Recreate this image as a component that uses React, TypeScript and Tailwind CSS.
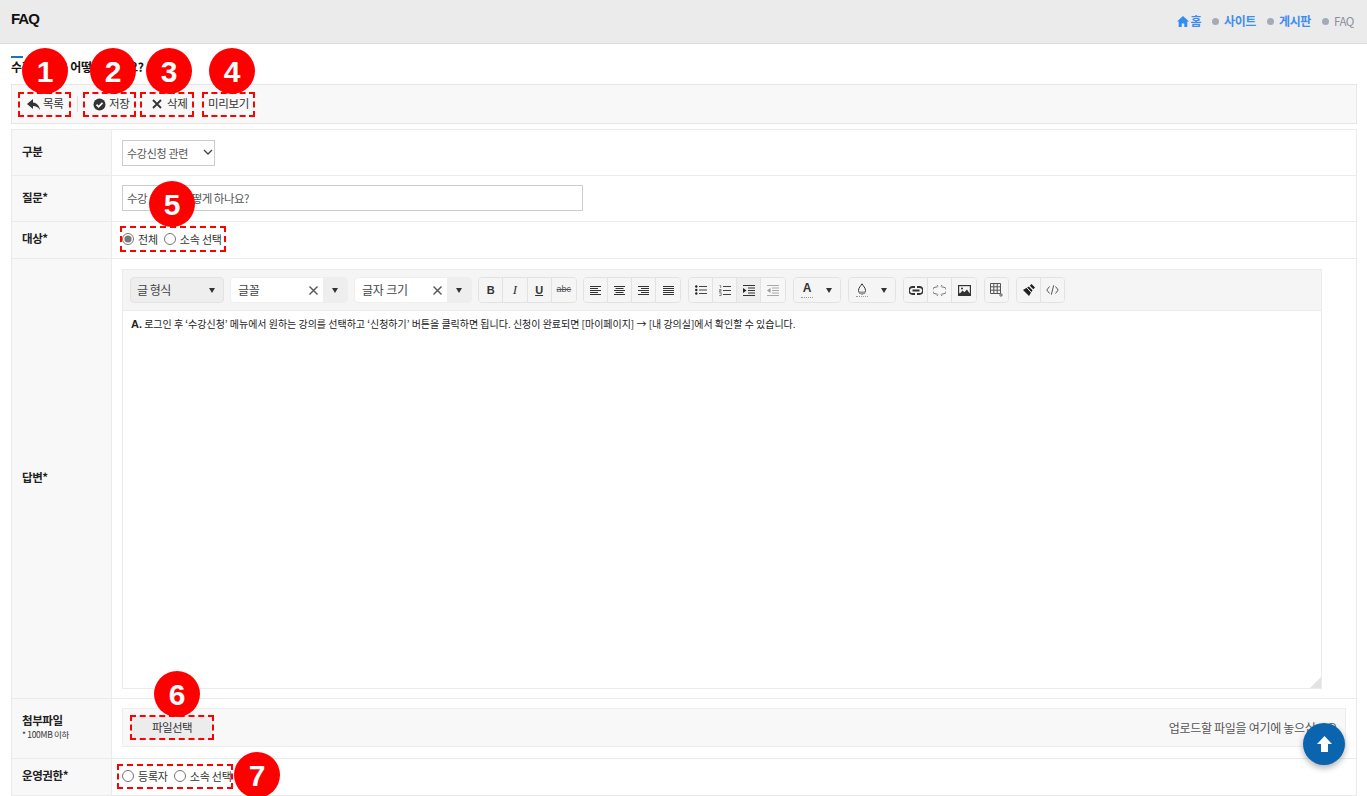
import React from "react";

const font = { fontFamily: '"Noto Sans CJK KR", "Noto Sans", sans-serif' };

const Lines = ({ kind }: { kind: "left" | "center" | "right" | "justify" }) => {
  const rows = {
    left: [[0, 11], [0, 8], [0, 11], [0, 8], [0, 11]],
    center: [[0, 11], [1.5, 8], [0, 11], [1.5, 8], [0, 11]],
    right: [[0, 11], [3, 8], [0, 11], [3, 8], [0, 11]],
    justify: [[0, 11], [0, 11], [0, 11], [0, 11], [0, 11]],
  }[kind];
  return (
    <svg width="11" height="11" viewBox="0 0 11 11" stroke="#333" strokeWidth="1">
      {rows.map(([x, w], i) => (
        <path key={i} d={`M${x} ${1.5 + i * 2}h${w}`} />
      ))}
    </svg>
  );
};

const Btn = ({ children, w = "w-[24px]", bg = "bg-[#f5f5f5]" }: { children: React.ReactNode; w?: string; bg?: string }) => (
  <div className={`${w} h-[24px] flex items-center justify-center border-r border-[#e2e2e2] last:border-r-0 ${bg}`}>
    {children}
  </div>
);

const Group = ({ children }: { children: React.ReactNode }) => (
  <div className="flex h-[26px] border border-[#e2e2e2] rounded-[4px] overflow-hidden shrink-0">{children}</div>
);

const Tri = () => <span className="w-0 h-0 border-x-[3.5px] border-x-transparent border-t-[5px] border-t-[#333]" />;

const ComboBox = ({ label }: { label: string }) => (
  <div className="flex w-[118px] h-[26px] rounded-[4px] overflow-hidden border border-[#eeeeee] shrink-0 bg-white">
    <div className="flex-1 flex items-center pl-[7px] pr-[5px] text-[12px] text-[#444] justify-between tracking-[-0.2px]">
      <span>{label}</span>
      <svg width="9" height="9" viewBox="0 0 9 9" stroke="#555" strokeWidth="1.4">
        <path d="M.5.500l8 8M8.500.500l-8 8" />
      </svg>
    </div>
    <div className="w-[24px] bg-[#eeeeee] flex items-center justify-center"><Tri /></div>
  </div>
);

const Row = ({ label, sub, h, children, top }: { label: string; sub?: string; h: string; children: React.ReactNode; top?: boolean }) => (
  <div className={`flex ${h} border-b border-[#ebebeb]`}>
    <div className="w-[100px] shrink-0 bg-[#f8f8f8] border-r border-[#ebebeb] pl-[10px] pb-[4px] flex flex-col justify-center">
      <div className="text-[11.5px] font-bold text-[#222] tracking-[-0.4px] leading-[14px]">{label}</div>
      {sub && <div className="text-[8.5px] text-[#333] leading-[12px] tracking-[-0.3px] mt-[1px]">{sub}</div>}
    </div>
    <div className={`flex-1 min-w-0 px-[10px] flex ${top ? "items-start" : "items-center pb-[2px]"}`}>{children}</div>
  </div>
);

const Radio = ({ label, checked }: { label: string; checked?: boolean }) => (
  <label className="flex items-center gap-[4px] text-[11px] text-[#333] tracking-[-0.2px]">
    <input type="radio" defaultChecked={checked} className="m-0 w-[12px] h-[12px] accent-[#777]" />
    {label}
  </label>
);

const ToolBtn = ({ icon, label, w }: { icon?: React.ReactNode; label: string; w: string }) => (
  <div className={`flex items-center ${w} text-[11.5px] text-[#333] tracking-[-0.3px] shrink-0 whitespace-nowrap`}>
    {icon}
    {label}
  </div>
);

const Circle = ({ n, cls }: { n: number; cls: string }) => (
  <div className={`absolute w-[46px] h-[46px] rounded-full bg-[#ff0000] text-white font-bold text-[30px] flex items-center justify-center ${cls}`} style={{ fontFamily: '"Liberation Sans", sans-serif' }}>
    {n}
  </div>
);

const Dash = ({ cls }: { cls: string }) => (
  <div className={`absolute border-2 border-dashed border-[#ff0000] ${cls}`} />
);

export default function App() {
  return (
    <div className="relative w-[1367px] h-[796px] overflow-hidden bg-white" style={font}>
      <header className="h-[44px] bg-[#ebebeb] border-b border-[#dcdcdc] flex items-start justify-between pl-[11px] pr-[13px]">
        <h1 className="text-[15px] font-bold text-[#111] tracking-[-1px] leading-[20px] mt-[9px]" style={{ fontFamily: '"Liberation Sans", sans-serif' }}>FAQ</h1>
        <nav className="flex items-center mt-[12px] text-[12px] tracking-[-0.4px] font-bold text-[#3e8ef0] leading-[18px]">
          <svg width="12" height="11" viewBox="0 0 12 11" fill="#2f8cf5" className="mr-[1px]"><path d="M6 0L0 5.500h1.700V11h3V7.500h2.600V11h3V5.500H12z" /></svg>
          <span>홈</span>
          <span className="w-[7px] h-[7px] rounded-full bg-[#a3abb8] ml-[11px] mr-[5px]" />
          <span>사이트</span>
          <span className="w-[7px] h-[7px] rounded-full bg-[#a3abb8] ml-[11px] mr-[5px]" />
          <span>게시판</span>
          <span className="w-[7px] h-[7px] rounded-full bg-[#a3abb8] ml-[11px] mr-[5px]" />
          <span className="font-normal text-[#8b9099] text-[11.5px]">FAQ</span>
        </nav>
      </header>

      <div className="pl-[11px] pr-[10px]">
        <div className="h-[40px] relative">
          <div className="absolute left-0 top-[12px] w-[12px] h-[2px] bg-[#1b75bb]" />
          <div className="pt-[15px] text-[12px] font-bold text-[#111] tracking-[-0.2px] leading-[16px]">수강 신청은 어떻게 하나요?</div>
        </div>

        <div className="h-[40px] bg-[#f8f8f8] border border-[#e6e6e6] flex items-center pl-[15px]">
          <ToolBtn w="w-[50px]" label="목록" icon={
            <svg width="13" height="11" viewBox="0 0 13 11" fill="#333" className="mr-[3px]"><path d="M6 0L0 5l6 5V7c3 0 5 1 7 4-.5-4-3-7-7-7.500z" /></svg>
          } />
          <div className="w-px h-[16px] bg-[#e0e0e0] mr-[15px]" />
          <ToolBtn w="w-[59px]" label="저장" icon={
            <svg width="13" height="13" viewBox="0 0 13 13" className="mr-[3px]"><circle cx="6.500" cy="6.500" r="6" fill="#333" /><path d="M3.500 6.700l2.100 2.100 3.900-4" fill="none" stroke="#fff" strokeWidth="1.700" /></svg>
          } />
          <ToolBtn w="w-[56px]" label="삭제" icon={
            <svg width="10" height="10" viewBox="0 0 10 10" stroke="#333" strokeWidth="1.800" className="mr-[5px]"><path d="M1 1l8 8M9 1l-8 8" /></svg>
          } />
          <ToolBtn w="w-[50px]" label="미리보기" />
        </div>

        <div className="mt-[5px] border-t border-l border-r border-[#ebebeb]">
          <Row label="구분" h="h-[46px]">
            <div className="relative w-[93px] h-[26px]">
              <select className="w-full h-full appearance-none border border-[#ccc] bg-white text-[11px] text-[#555] pl-[4px] tracking-[-0.3px]">
                <option>수강신청 관련</option>
              </select>
              <svg width="10" height="6" viewBox="0 0 10 6" fill="none" stroke="#444" strokeWidth="1.300" className="absolute right-[2px] top-[10px]"><path d="M1 1l4 4 4-4" /></svg>
            </div>
          </Row>
          <Row label="질문*" h="h-[46px]">
            <input defaultValue="수강 신청은 어떻게 하나요?" className="w-[461px] h-[26px] border border-[#ccc] px-[4px] text-[11.5px] text-[#555] tracking-[-0.5px]" />
          </Row>
          <Row label="대상*" h="h-[37px]">
            <div className="flex items-center gap-[6px]">
              <Radio label="전체" checked />
              <Radio label="소속 선택" />
            </div>
          </Row>
          <Row label="답변*" h="h-[440px]" top>
            <div className="mt-[10px] w-[1200px] h-[420px] border border-[#ebebeb] flex flex-col relative">
              <div className="h-[41px] shrink-0 bg-[#f5f5f5] border-b border-[#ebebeb] flex items-center gap-[6px] pl-[7px]">
                <div className="w-[94px] h-[26px] flex items-center justify-between pl-[6px] pr-[8px] bg-[#eeeeee] border border-[#e2e2e2] rounded-[4px] text-[12px] text-[#444] shrink-0 tracking-[-0.5px]">
                  <span>글 형식</span><Tri />
                </div>
                <ComboBox label="글꼴" />
                <ComboBox label="글자 크기" />
                <Group>
                  <Btn w="w-[24.25px]"><b className="text-[11px] text-[#333]" style={{ fontFamily: '"Liberation Sans", sans-serif' }}>B</b></Btn>
                  <Btn w="w-[24.25px]"><i className="text-[13px] text-[#333]" style={{ fontFamily: '"Liberation Serif", serif' }}>I</i></Btn>
                  <Btn w="w-[24.25px]"><u className="text-[11px] font-bold text-[#333]" style={{ fontFamily: '"Liberation Sans", sans-serif' }}>U</u></Btn>
                  <Btn w="w-[24.25px]"><s className="text-[9px] text-[#555]" style={{ fontFamily: '"Liberation Sans", sans-serif' }}>abc</s></Btn>
                </Group>
                <Group>
                  <Btn><Lines kind="left" /></Btn>
                  <Btn><Lines kind="center" /></Btn>
                  <Btn><Lines kind="right" /></Btn>
                  <Btn><Lines kind="justify" /></Btn>
                </Group>
                <div className="flex gap-[7px] ml-[1px] items-center">
                  <Group>
                    <Btn>
                      <svg width="12" height="10" viewBox="0 0 12 10" stroke="#444"><path d="M4 1.500h8M4 5h8M4 8.500h8" /><g fill="#222" stroke="none"><circle cx="1.300" cy="1.500" r="1.200" /><circle cx="1.300" cy="5" r="1.200" /><circle cx="1.300" cy="8.500" r="1.200" /></g></svg>
                    </Btn>
                    <Btn>
                      <svg width="12" height="11" viewBox="0 0 12 11" stroke="#444"><path d="M4 1.500h8M4 5.500h8M4 9.500h8" /><path d="M.5.500h1.200v2.500M.2 4.500h2v1.200H.4v1.200h2M.2 8h2v2.500H.2" strokeWidth=".6" fill="none" /></svg>
                    </Btn>
                    <Btn bg="bg-[#eeeeee]">
                      <svg width="12" height="11" viewBox="0 0 12 11" stroke="#333"><path d="M0 .500h12M5 3h7M5 5.500h7M5 8h7M0 10.500h12" /><path d="M0 3v5l3.500-2.500z" fill="#222" stroke="none" /></svg>
                    </Btn>
                    <Btn bg="bg-[#f7f7f7]">
                      <svg width="12" height="11" viewBox="0 0 12 11" stroke="#aaa"><path d="M0 .500h12M5 3h7M5 5.500h7M5 8h7M0 10.500h12" /><path d="M3.500 3v5L0 5.500z" fill="#999" stroke="none" /></svg>
                    </Btn>
                  </Group>
                  <Group>
                    <div className="w-[46px] flex items-center bg-[#f5f5f5] pl-[7px] gap-[13px]">
                      <span className="flex flex-col items-center">
                        <span className="text-[12px] font-bold text-[#333] leading-[11px]" style={{ fontFamily: '"Liberation Sans", sans-serif' }}>A</span>
                        <span className="w-[12px] border-b border-dotted border-[#999] mt-[3px]" />
                      </span>
                      <Tri />
                    </div>
                  </Group>
                  <Group>
                    <div className="w-[46px] flex items-center bg-[#f5f5f5] pl-[7px] gap-[13px]">
                      <span className="flex flex-col items-center">
                        <svg width="10" height="12" viewBox="0 0 10 12" fill="none" stroke="#333"><path d="M5 .8C3.800 3 1.500 4.800 1.500 7.500a3.500 3.500 0 0 0 7 0C8.500 4.800 6.200 3 5 .8z" /><path d="M2 8.500a3 3 0 0 0 6 0z" fill="#999" stroke="none" /></svg>
                        <span className="w-[12px] border-b border-dotted border-[#999] mt-[1px]" />
                      </span>
                      <Tri />
                    </div>
                  </Group>
                  <Group>
                    <Btn>
                      <svg width="14" height="9" viewBox="0 0 14 9" fill="none" stroke="#333" strokeWidth="1.800"><path d="M6 1H3.500a3.500 3.500 0 0 0 0 7H6M8 1h2.500a3.500 3.500 0 0 1 0 7H8M3.500 4.500h7" /></svg>
                    </Btn>
                    <Btn bg="bg-[#f7f7f7]">
                      <svg width="13" height="13" viewBox="0 0 13 13" fill="none" stroke="#777"><path d="M4.500 3H3a3.500 3.500 0 0 0 0 7h1.500M8.500 3H10a3.500 3.500 0 0 1 0 7H8.500M4 1l1 1.500M9 1L8 2.500M4 12l1-1.500M9 12l-1-1.500" /></svg>
                    </Btn>
                    <Btn>
                      <svg width="13" height="11" viewBox="0 0 13 11"><rect width="13" height="11" fill="#333" /><rect x="1.200" y="1.200" width="10.600" height="7" fill="#f5f5f5" /><path d="M1.500 9l3-3.500 1.800 1.800L9 4.500l3 4.500z" fill="#333" /><circle cx="4" cy="3.500" r="1" fill="#333" /></svg>
                    </Btn>
                  </Group>
                  <Group>
                    <Btn w="w-[23px]">
                      <svg width="13" height="14" viewBox="0 0 13 14" fill="none" stroke="#555"><path d="M.5.500h10v10H.5zM.5 3.800h10M.5 7.200h10M3.800.500v10M7.200.500v10" /><path d="M11 10v4M9 12h4" stroke="#666" /></svg>
                    </Btn>
                  </Group>
                  <Group>
                    <Btn>
                      <svg width="14" height="14" viewBox="0 0 14 14"><path d="M9.500 1L13 4.500 11.300 6.200 7.800 2.700z" fill="#222" /><path d="M6.800 3.500L10.500 7.200 7 13 1 7z" fill="#222" /><path d="M2 1.500l10 11" stroke="#f5f5f5" strokeWidth="1" /></svg>
                    </Btn>
                    <Btn w="w-[23px]">
                      <svg width="13" height="10" viewBox="0 0 13 10" fill="none" stroke="#444" strokeWidth=".9"><path d="M3.500 1.500L.8 5l2.700 3.500M9.500 1.500L12.200 5 9.500 8.500M7.700.3L5.300 9.700" /></svg>
                    </Btn>
                  </Group>
                </div>
              </div>
              <div className="px-[8px] pt-[5px] text-[10px] leading-[16px] text-[#222] whitespace-nowrap tracking-[-0.02px]">
                <b className="text-[11px]" style={{ fontFamily: '"Liberation Sans", sans-serif' }}>A.</b> 로그인 후 ‘수강신청’ 메뉴에서 원하는 강의를 선택하고 ‘신청하기’ 버튼을 클릭하면 됩니다. 신청이 완료되면 [마이페이지] → [내 강의실]에서 확인할 수 있습니다.
              </div>
              <div className="absolute right-0 bottom-0 w-0 h-0 border-l-[11px] border-l-transparent border-b-[11px] border-b-[#e3e3e3]" />
            </div>
          </Row>
          <Row label="첨부파일" sub="* 100MB 이하" h="h-[60px]">
            <div className="w-full h-[39px] bg-[#f8f8f8] border border-[#ededed] flex items-center justify-between pl-[8px] pr-[8px]">
              <div className="w-[82px] h-[24px] bg-[#ececec] flex items-center justify-center text-[11.5px] text-[#333] tracking-[-0.6px]">파일선택</div>
              <div className="text-[12px] text-[#555] tracking-[-0.3px]">업로드할 파일을 여기에 놓으십시오</div>
            </div>
          </Row>
          <Row label="운영권한*" h="h-[37px]">
            <div className="flex items-center gap-[6px]">
              <Radio label="등록자" />
              <Radio label="소속 선택" />
            </div>
          </Row>
        </div>
      </div>

      <Dash cls="left-[18px] top-[92px] w-[53px] h-[25px]" />
      <Dash cls="left-[83px] top-[92px] w-[53px] h-[25px]" />
      <Dash cls="left-[140px] top-[92px] w-[54px] h-[25px]" />
      <Dash cls="left-[202px] top-[92px] w-[53px] h-[25px]" />
      <Dash cls="left-[120px] top-[226px] w-[106px] h-[26px]" />
      <Dash cls="left-[130px] top-[715px] w-[84px] h-[25px]" />
      <Dash cls="left-[117px] top-[764px] w-[116px] h-[25px]" />
      <Circle n={1} cls="left-[22px] top-[48px]" />
      <Circle n={2} cls="left-[90px] top-[48px]" />
      <Circle n={3} cls="left-[146px] top-[48px]" />
      <Circle n={4} cls="left-[209px] top-[48px]" />
      <Circle n={5} cls="left-[149px] top-[181px]" />
      <Circle n={6} cls="left-[154px] top-[671px]" />
      <Circle n={7} cls="left-[234px] top-[752px]" />

      <div className="absolute left-[1303px] top-[723px] w-[42px] h-[42px] rounded-full bg-[#0b65ae] shadow-[0_3px_6px_rgba(0,0,0,0.3)] flex items-center justify-center">
        <svg width="15" height="16" viewBox="0 0 15 16" fill="#fff"><path d="M7.500 0L15 8h-4v8H4V8H0z" /></svg>
      </div>
    </div>
  );
}
